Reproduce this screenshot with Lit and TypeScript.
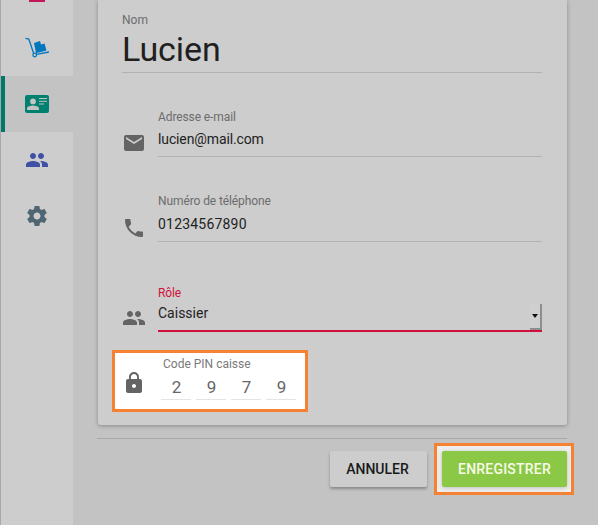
import { LitElement, html, css, svg } from "lit";
import { customElement } from "lit/decorators.js";

const icon = (d: unknown, size: number, color: string, box = 24) => html`<svg width=${size} height=${size} viewBox="0 0 ${box} ${box}" fill=${color}>${d}</svg>`;

const people = svg`<path d="M16 11c1.66 0 2.99-1.34 2.99-3S17.66 5 16 5s-3 1.34-3 3 1.34 3 3 3zm-8 0c1.66 0 2.99-1.34 2.99-3S9.66 5 8 5 5 6.34 5 8s1.34 3 3 3zm0 2c-2.33 0-7 1.17-7 3.5V19h14v-2.5c0-2.33-4.67-3.5-7-3.5zm8 0c-.29 0-.62.02-.97.05 1.16.84 1.97 1.97 1.97 3.45V19h6v-2.5c0-2.33-4.67-3.5-7-3.5z"/>`;
const mail = svg`<path d="M20 4H4c-1.1 0-2 .9-2 2v12c0 1.1.9 2 2 2h16c1.1 0 2-.9 2-2V6c0-1.100-.9-2-2-2zm0 4l-8 5-8-5V6l8 5 8-5v2z"/>`;
const phone = svg`<path d="M6.62 10.79c1.44 2.83 3.760 5.140 6.590 6.590l2.200-2.200c.27-.27.67-.36 1.020-.24 1.120.37 2.330.57 3.570.57.55 0 1 .45 1 1V20c0 .55-.45 1-1 1-9.390 0-17-7.610-17-17 0-.55.45-1 1-1h3.500c.55 0 1 .45 1 1 0 1.250.2 2.450.57 3.570.11.35.03.74-.25 1.020l-2.200 2.200z"/>`;
const lock = svg`<path d="M18 8h-1V6c0-2.760-2.240-5-5-5S7 3.240 7 6v2H6c-1.100 0-2 .9-2 2v10c0 1.100.9 2 2 2h12c1.100 0 2-.9 2-2V10c0-1.100-.9-2-2-2zm-6 9c-1.100 0-2-.9-2-2s.9-2 2-2 2 .9 2 2-.9 2-2 2zm3.100-9H8.900V6c0-1.710 1.390-3.100 3.100-3.100 1.710 0 3.100 1.390 3.100 3.100v2z"/>`;
const gear = svg`<path d="M19.430 12.980c.04-.32.07-.64.07-.98s-.03-.66-.07-.98l2.110-1.650c.19-.15.24-.42.12-.64l-2-3.460c-.12-.22-.39-.3-.61-.22l-2.490 1c-.52-.4-1.080-.73-1.690-.98l-.38-2.650C14.460 2.180 14.250 2 14 2h-4c-.25 0-.46.18-.49.420l-.38 2.650c-.61.25-1.170.59-1.690.98l-2.490-1c-.23-.09-.49 0-.61.22l-2 3.460c-.13.22-.07.49.12.64l2.110 1.650c-.04.32-.07.65-.07.98s.03.66.07.98l-2.110 1.650c-.19.15-.24.42-.12.64l2 3.460c.12.22.39.3.61.22l2.490-1c.52.4 1.080.73 1.690.98l.38 2.650c.03.24.24.42.49.42h4c.25 0 .46-.18.49-.42l.38-2.650c.61-.25 1.170-.59 1.690-.98l2.490 1c.23.09.49 0 .61-.22l2-3.460c.12-.22.07-.49-.12-.64l-2.110-1.650zM12 15.500c-1.930 0-3.500-1.570-3.500-3.500s1.570-3.500 3.500-3.500 3.500 1.570 3.500 3.500-1.570 3.500-3.500 3.500z"/>`;
const card = svg`<path fill-rule="evenodd" d="M2 0h20a2 2 0 0 1 2 2v14a2 2 0 0 1-2 2H2a2 2 0 0 1-2-2V2a2 2 0 0 1 2-2zm6 3.500a2.900 2.900 0 1 0 0 5.800A2.900 2.900 0 0 0 8 3.500zm-6 11.500h12v-1.700c0-1.800-4-2.800-6-2.800s-6 1-6 2.800zM14 3v1.100h8V3zm0 2.700v1.100h8V5.700zm0 2.700v1.100h5V8.400z"/>`;
const dolly = svg`<g fill="none" stroke="#0277bd" stroke-width="1.300"><path d="M.5 2.300 3.800 3 8.700 17.500"/><circle cx="9.700" cy="19" r="1.800"/><path d="M11.500 18.300 24 16"/></g><path d="M9 7 15 5 16 8.500 19.500 7.500 21.500 14.500 11 17.200z"/>`;

@customElement("app-root")
export class AppRoot extends LitElement {
  static styles = css`
    :host { display: block; width: 598px; height: 525px; overflow: hidden; background: #c3c3c3; font-family: Roboto, "Liberation Sans", sans-serif; color: #1f1f1f; }
    .page { display: flex; height: 525px; }
    .side { width: 72px; margin-left: 1px; flex: none; background: #cdcdcd; box-shadow: -1px 0 0 #a8a8a8; display: flex; flex-direction: column; }
    .nav { height: 56px; display: flex; align-items: center; justify-content: center; flex: none; box-sizing: border-box; }
    .nav.top { height: 20px; align-items: flex-start; }
    .nav.active { background: #c3c3c3; border-left: 4px solid #00796b; padding-right: 4px; }
    .pink { width: 16px; height: 2px; background: #c2185b; display: block; }
    .main { flex: 1; padding: 0 31px 0 24px; display: flex; flex-direction: column; height: 525px; box-sizing: border-box; }
    .sheet { height: 425px; flex: none; background: #cdcdcd; border-radius: 0 0 3px 3px; box-shadow: 0 1px 4px rgba(0,0,0,.3); padding: 0 25px 0 24px; margin-left: 1px; box-sizing: border-box; display: flex; flex-direction: column; }
    .name { padding-top: 14px; height: 73px; box-sizing: border-box; border-bottom: 1px solid #b1b1b1; flex: none; }
    .name .lab { font-size: 12px; line-height: 13px; color: #6c6c6c; }
    .name .val { font-size: 34px; line-height: 40px; margin-top: 2px; letter-spacing: -.1px; }
    .row { display: flex; align-items: flex-end; flex: none; }
    .row svg { display: block; flex: none; }
    .ic { width: 36px; flex: none; display: flex; align-items: center; justify-content: flex-start; padding-bottom: 2px; }
    .field { flex: 1; border-bottom: 1px solid #b1b1b1; height: 48px; box-sizing: border-box; padding-top: 1px; }
    .field .lab { font-size: 12px; line-height: 14px; color: #6c6c6c; letter-spacing: -.1px; }
    .field .val { font-size: 14px; line-height: 18px; margin-top: 6px; color: #222; }
    .r1 .val { letter-spacing: -.12px; }
    .r2 .field { padding-top: 0; }
    .r2 .val { margin-top: 7px; letter-spacing: .2px; }
    .r1 { margin-top: 36px; }
    .r2 { margin-top: 37px; }
    .r3 { margin-top: 42px; }
    .r3 .field { border-bottom: 2px solid #d0103a; position: relative; padding-top: 2px; }
    .r3 .lab { color: #d0103a; }
    .r3 .val { margin-top: 0; padding-top: 4px; }
    .spin { position: absolute; right: 0; bottom: 0; width: 12px; height: 26px; box-sizing: border-box; background: #cfcfcf; border-right: 2px solid #8e8e8e; border-bottom: 2px solid #8e8e8e; display: flex; align-items: center; justify-content: center; }
    .spin i { width: 0; height: 0; border-left: 3.500px solid transparent; border-right: 3.500px solid transparent; border-top: 4px solid #111; }
    .pin { align-self: flex-start; margin: 18px 0 0 -10px; width: 196px; height: 62px; box-sizing: border-box; background: #fff; border: 3px solid #f58133; display: flex; align-items: flex-start; }
    .pin .lock { width: 48px; padding: 18px 0 0 7px; box-sizing: border-box; flex: none; }
    .pin .lab { font-size: 12px; line-height: 14px; color: #7a7a7a; margin-top: 4px; }
    .digits { display: flex; gap: 5px; margin-top: 4px; margin-left: -2px; }
    .digits span { width: 30px; padding-left: 1px; box-sizing: border-box; text-align: center; font-size: 17px; line-height: 24px; color: #666; border-bottom: 1px solid #e4e4e4; }
    .rule { height: 1px; background: #a9a9a9; margin-top: 13px; flex: none; }
    .actions { display: flex; justify-content: flex-end; align-items: center; gap: 7px; margin-top: 4px; margin-right: -7px; }
    .btn { height: 36px; display: flex; align-items: center; justify-content: center; border-radius: 2px; font-size: 14px; font-weight: 500; box-sizing: border-box; }
    .cancel { width: 97px; padding-right: 2px; background: #cdcdcd; color: #1a1a1a; box-shadow: 0 2px 3px rgba(0,0,0,.3); }
    .hl { width: 140px; height: 52px; box-sizing: border-box; background: #eee; border: 3px solid #f58133; display: flex; align-items: center; justify-content: center; }
    .save { width: 125px; padding-left: 1px; background: #8bc846; color: #f8fbe9; box-shadow: 0 1px 4px rgba(0,0,0,.2); letter-spacing: .2px; }
  `;

  render() {
    return html`<div class="page">
      <nav class="side">
        <div class="nav top"><span class="pink"></span></div>
        <div class="nav">${icon(dolly, 24, "#0277bd")}</div>
        <div class="nav active">${html`<svg width="24" height="18" viewBox="0 0 24 18" fill="#00806f">${card}</svg>`}</div>
        <div class="nav">${icon(people, 24, "#3f51a5")}</div>
        <div class="nav">${icon(gear, 24, "#4f6571")}</div>
      </nav>
      <main class="main">
        <section class="sheet">
          <div class="name"><div class="lab">Nom</div><div class="val">Lucien</div></div>
          <div class="row r1"><div class="ic">${icon(mail, 24, "#646464")}</div><div class="field"><div class="lab">Adresse e-mail</div><div class="val">lucien@mail.com</div></div></div>
          <div class="row r2"><div class="ic">${icon(phone, 24, "#646464")}</div><div class="field"><div class="lab">Numéro de téléphone</div><div class="val">01234567890</div></div></div>
          <div class="row r3"><div class="ic">${icon(people, 24, "#646464")}</div><div class="field"><div class="lab">Rôle</div><div class="val">Caissier</div><div class="spin"><i></i></div></div></div>
          <div class="pin">
            <div class="lock">${icon(lock, 24, "#646464")}</div>
            <div><div class="lab">Code PIN caisse</div><div class="digits"><span>2</span><span>9</span><span>7</span><span>9</span></div></div>
          </div>
        </section>
        <div class="rule"></div>
        <div class="actions">
          <div class="btn cancel">ANNULER</div>
          <div class="hl"><div class="btn save">ENREGISTRER</div></div>
        </div>
      </main>
    </div>`;
  }
}
